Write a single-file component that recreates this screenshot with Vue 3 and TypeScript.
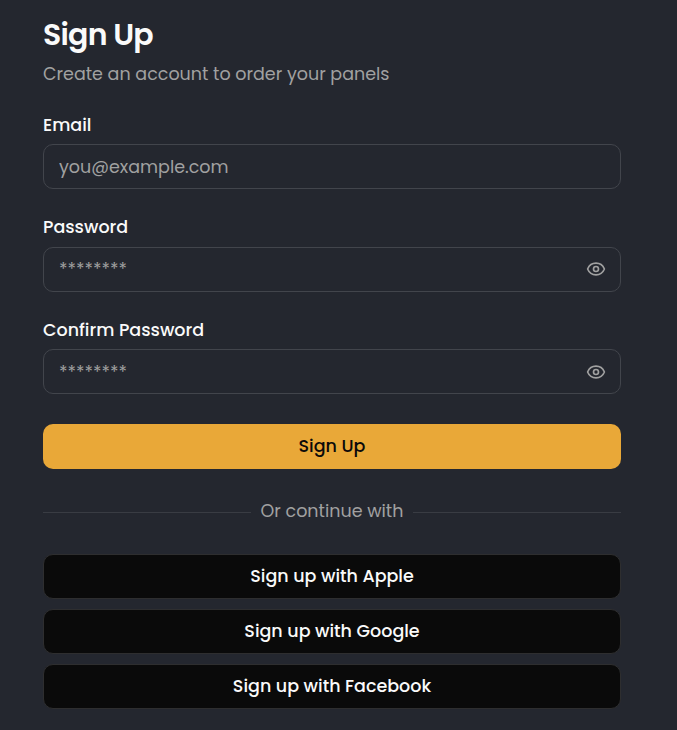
<script setup lang="ts">
import { reactive } from 'vue'

interface Field {
  id: string
  label: string
  placeholder: string
  secret: boolean
}

const fields: Field[] = [
  { id: 'email', label: 'Email', placeholder: 'you@example.com', secret: false },
  { id: 'password', label: 'Password', placeholder: '********', secret: true },
  { id: 'confirm', label: 'Confirm Password', placeholder: '********', secret: true },
]

const providers = ['Apple', 'Google', 'Facebook']

const values = reactive<Record<string, string>>({ email: '', password: '', confirm: '' })
const shown = reactive<Record<string, boolean>>({ password: false, confirm: false })

const inputType = (f: Field) => {
  if (!f.secret) return 'email'
  return shown[f.id] ? 'text' : 'password'
}
</script>

<template>
  <main class="signup">
    <header>
      <h1 class="title">Sign Up</h1>
      <p class="subtitle">Create an account to order your panels</p>
    </header>

    <form class="form" @submit.prevent>
      <div v-for="f in fields" :key="f.id" class="field">
        <label :for="f.id" class="label">{{ f.label }}</label>
        <div class="control">
          <input
            :id="f.id"
            v-model="values[f.id]"
            :type="inputType(f)"
            :placeholder="f.placeholder"
            class="input"
          />
          <button v-if="f.secret" type="button" class="toggle"
            aria-label="Toggle password visibility" @click="shown[f.id] = !shown[f.id]"
          >
            <svg viewBox="0 0 24 24" class="eye">
              <path d="M2.06 12.35a1 1 0 0 1 0-.7 10.75 10.75 0 0 1 19.88 0 1 1 0 0 1 0 .7 10.75 10.75 0 0 1-19.88 0" />
              <circle cx="12" cy="12" r="3" />
            </svg>
          </button>
        </div>
      </div>
      <button type="submit" class="btn primary">Sign Up</button>
    </form>

    <div class="divider"><span>Or continue with</span></div>

    <div class="social">
      <button v-for="p in providers" :key="p" type="button" class="btn dark">
        Sign up with {{ p }}
      </button>
    </div>
  </main>
</template>

<style>
body {
  margin: 0;
  background: #24272f;
}
</style>

<style scoped>
.signup {
  box-sizing: border-box;
  min-height: 730px;
  padding: 15.7px 56px 20px 43px;
  background: #24272f;
  color: #fafafa;
  font-family: Poppins, Inter, sans-serif;
  font-size: 17.5px;
}
.title {
  margin: 0;
  font-size: 30px;
  line-height: 37.5px;
  font-weight: 600;
  letter-spacing: -0.75px;
}
.subtitle {
  margin: 8.5px 0 30px;
  line-height: 25px;
  color: #a1a1a1;
}
.form {
  display: flex;
  flex-direction: column;
  gap: 30px;
}
.field {
  display: flex;
  flex-direction: column;
  gap: 10px;
}
.label {
  align-self: flex-start;
  line-height: 17.5px;
  font-weight: 500;
}
.control {
  position: relative;
  display: flex;
}
.input {
  box-sizing: border-box;
  width: 100%;
  height: 45px;
  padding: 0 15px;
  border: 1px solid #42454c;
  border-radius: 10px;
  background: transparent;
  color: #fafafa;
  font: inherit;
  outline: none;
}
.input::placeholder {
  color: #a1a1a1;
  opacity: 1;
}
.toggle {
  position: absolute;
  top: 0;
  right: 15px;
  display: flex;
  align-items: center;
  height: 100%;
  padding: 0;
  border: 0;
  background: none;
  color: #a1a1a1;
}
.eye {
  width: 20px;
  height: 20px;
  fill: none;
  stroke: currentColor;
  stroke-width: 2;
  stroke-linecap: round;
  stroke-linejoin: round;
}
.btn {
  box-sizing: border-box;
  height: 45px;
  padding: 0 0 2px;
  border: 0;
  border-radius: 10px;
  font: inherit;
  font-weight: 500;
}
.primary {
  background: #e9a838;
  color: #0a0a0a;
}
.divider {
  display: flex;
  align-items: center;
  gap: 10px;
  margin: 30px 0;
  line-height: 25px;
  color: #a1a1a1;
}
.divider::before,
.divider::after {
  content: '';
  flex: 1;
  height: 1px;
  margin-top: 1.5px;
  background: #393c43;
}
.social {
  display: flex;
  flex-direction: column;
  gap: 10px;
}
.btn.dark {
  border: 1px solid #2e2e2f;
  background: #0a0a0a;
  color: #fafafa;
}
</style>
